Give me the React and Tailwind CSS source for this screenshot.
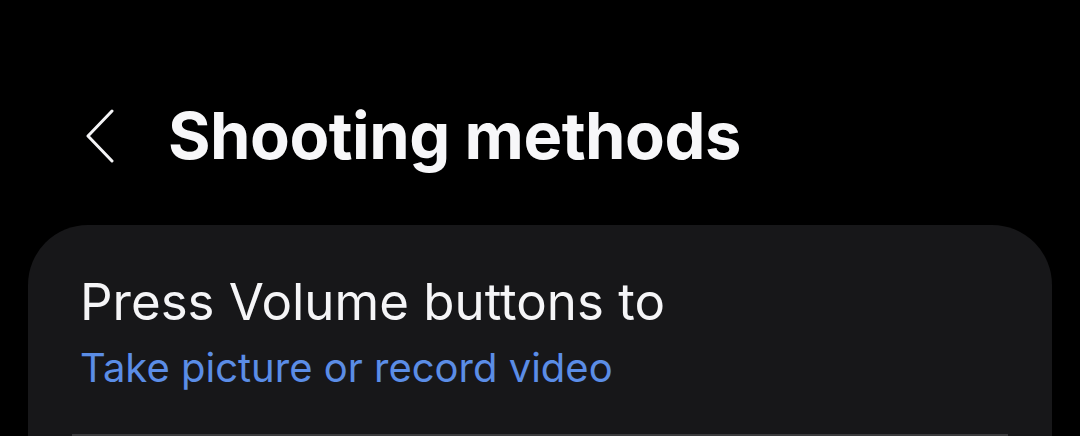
import React from "react";

export default function App() {
  return (
    <div
      className="w-[1080px] h-[436px] overflow-hidden bg-black"
      style={{ fontFamily: "Inter, 'Noto Sans', sans-serif" }}
    >
      {/* Header */}
      <div className="flex items-center h-[225px] pl-[84px] pt-[46px]">
        <svg width="32" height="54" viewBox="0 0 32 54" fill="none" className="shrink-0">
          <path
            d="M28 2 L4 27 L28 52"
            stroke="#f4f4f6"
            strokeWidth="3"
            strokeLinecap="round"
            strokeLinejoin="round"
          />
        </svg>
        <h1 className="ml-[52px] text-[65px] font-bold text-[#f7f7f9] tracking-[-0.5px] leading-none">
          Shooting methods
        </h1>
      </div>

      {/* Card */}
      <div className="mx-[28px] h-[300px] rounded-[60px] bg-[#171719]">
        <div className="pl-[52px] pr-[44px] pt-[47px]">
          <p className="text-[51px] leading-[60px] text-[#f5f5f7]">
            Press Volume buttons to
          </p>
          <p className="mt-[12px] text-[40px] leading-[48px] text-[#5b8de6]">
            Take picture or record video
          </p>
        </div>
        <div className="mt-[42px] mx-[44px] h-[2px] bg-[#3a3a3c]" />
      </div>
    </div>
  );
}
